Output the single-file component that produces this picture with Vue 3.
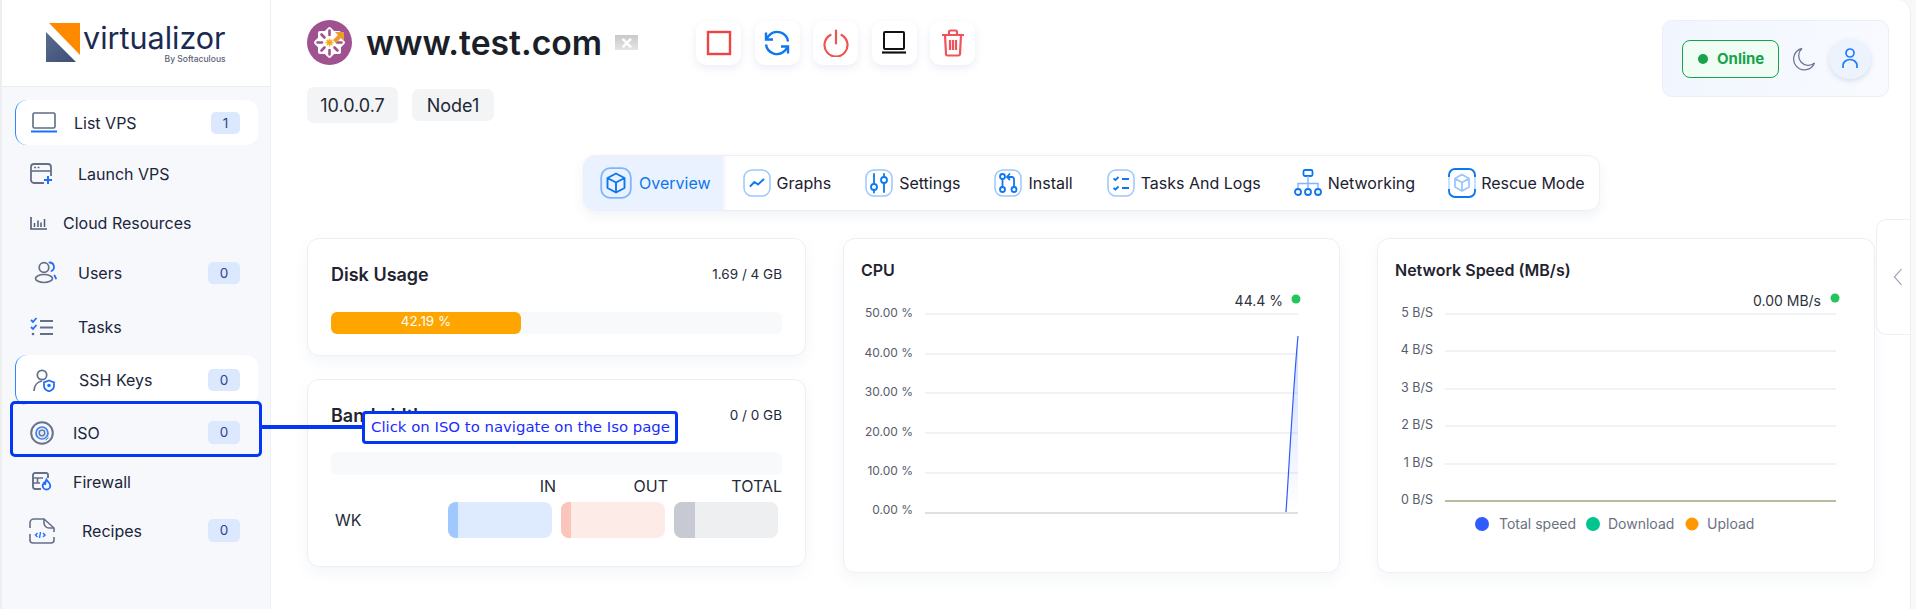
<script setup>
const cpuTicks = [
  { y: 315, ty: 317.5, label: '50.00 %' },
  { y: 355, ty: 357.5, label: '40.00 %' },
  { y: 394, ty: 396.5, label: '30.00 %' },
  { y: 434, ty: 436.5, label: '20.00 %' },
  { y: 474, ty: 476, label: '10.00 %' },
  { y: 514, ty: 515, label: '0.00 %' }
]
const netTicks = [
  { y: 315, ty: 318, label: '5 B/S' },
  { y: 352, ty: 355, label: '4 B/S' },
  { y: 390, ty: 393, label: '3 B/S' },
  { y: 427, ty: 430, label: '2 B/S' },
  { y: 465, ty: 468, label: '1 B/S' },
  { y: 502, ty: 505, label: '0 B/S' }
]
</script>

<template>
  <div class="page">
    <aside class="sidebar">
      <div class="brand">
        <svg class="brand-mark" width="36" height="42" viewBox="0 0 36 42">
          <defs>
            <linearGradient id="navy" x1="0" y1="0" x2="1" y2="1">
              <stop offset="0" stop-color="#5a6d8e" />
              <stop offset="1" stop-color="#3c4d74" />
            </linearGradient>
          </defs>
          <polygon points="3,0 34,0 34,32" fill="#ff8a00" />
          <polygon points="0,9 0,39 30,39" fill="url(#navy)" />
        </svg>
        <div class="brand-text">
          <div class="brand-name">virtualizor</div>
          <div class="brand-by">By Softaculous</div>
        </div>
      </div>

      <nav class="nav">
        <a class="item card-item first">
          <svg class="ic ic-list" width="28" height="22" viewBox="0 0 28 22">
            <rect x="3" y="1" width="22" height="15" rx="1.5" fill="none" stroke="#5f6b85" stroke-width="1.6" />
            <path d="M1 19.5h26" stroke="#1f6fff" stroke-width="2" />
          </svg>
          <span>List VPS</span>
          <b class="badge narrow">1</b>
        </a>
        <a class="item launch">
          <svg class="ic" width="24" height="22" viewBox="0 0 24 22">
            <path d="M14 20H4a3 3 0 0 1-3-3V4a3 3 0 0 1 3-3h14a3 3 0 0 1 3 3v9" fill="none" stroke="#656f87" stroke-width="1.8" />
            <path d="M1 8h20" stroke="#656f87" stroke-width="1.6" />
            <path d="M4 4.500h2M7.500 4.500h2" stroke="#656f87" stroke-width="1.4" />
            <path d="M18 13v8M14 17h8" stroke="#1f6fff" stroke-width="2" />
          </svg>
          <span>Launch VPS</span>
        </a>
        <a class="item cloud">
          <svg class="ic" width="18" height="14" viewBox="0 0 18 14">
            <path d="M1 1v12h16" fill="none" stroke="#4f5a73" stroke-width="1.6" />
            <path d="M4.500 11V7M8 11V4.500M11 11V6.500M14.500 11V3" stroke="#4f5a73" stroke-width="1.5" />
          </svg>
          <span>Cloud Resources</span>
        </a>
        <a class="item users">
          <svg class="ic" width="24" height="23" viewBox="0 0 24 23">
            <circle cx="10" cy="6.500" r="4.800" fill="none" stroke="#656f87" stroke-width="1.7" />
            <ellipse cx="10" cy="17.500" rx="8.500" ry="4" fill="none" stroke="#656f87" stroke-width="1.7" />
            <path d="M15.500 1.500a4.500 4.500 0 0 1 2 8.500M20.500 14.500l1.500 3" fill="none" stroke="#1f6fff" stroke-width="1.8" stroke-linecap="round" />
          </svg>
          <span>Users</span>
          <b class="badge">0</b>
        </a>
        <a class="item tasks">
          <svg class="ic" width="24" height="20" viewBox="0 0 24 20">
            <path d="M1 3l2 2 3.500-4M1 10l2 2 3.500-4" fill="none" stroke="#1f6fff" stroke-width="1.8" />
            <circle cx="3" cy="17" r="1.300" fill="#5f6b85" />
            <path d="M10 4h13M10 10.500h13M10 17h13" stroke="#656f87" stroke-width="1.8" />
          </svg>
          <span>Tasks</span>
        </a>
        <a class="item card-item ssh">
          <svg class="ic" width="22" height="23" viewBox="0 0 22 23">
            <circle cx="9" cy="6" r="4.700" fill="none" stroke="#656f87" stroke-width="1.700" />
            <path d="M1 22c0-5 3-9 8-10" fill="none" stroke="#656f87" stroke-width="1.700" />
            <path d="M16 11.500l5 1.800v3.700c0 2.600-2.400 4.400-5 5.400-2.600-1-5-2.800-5-5.400v-3.700z" fill="none" stroke="#1f6fff" stroke-width="1.800" />
            <circle cx="16" cy="16.500" r="1.800" fill="#1f6fff" />
          </svg>
          <span>SSH Keys</span>
          <b class="badge">0</b>
        </a>
        <a class="item iso">
          <svg class="ic" width="24" height="24" viewBox="0 0 24 24">
            <circle cx="12" cy="12" r="10.800" fill="none" stroke="#6b7388" stroke-width="2" />
            <circle cx="12" cy="12" r="6" fill="#dbe8fd" stroke="#3b82f6" stroke-width="1.700" />
            <circle cx="12" cy="12" r="2.800" fill="none" stroke="#6b7388" stroke-width="1.300" />
            <path d="M18.500 16.500a8 8 0 0 1-3 2.500" fill="none" stroke="#6b7388" stroke-width="1" />
          </svg>
          <span>ISO</span>
          <b class="badge tall">0</b>
        </a>
        <a class="item firewall">
          <svg class="ic" width="20" height="19" viewBox="0 0 20 19">
            <path d="M9 17H3a2 2 0 0 1-2-2V3a2 2 0 0 1 2-2h11a2 2 0 0 1 2 2v3" fill="none" stroke="#656f87" stroke-width="1.900" />
            <path d="M1 6h10M1 11h7M5.500 6v5" stroke="#656f87" stroke-width="1.700" />
            <path d="M14.500 7.500c.8 2 3.800 3.200 3.800 6.200a3.800 3.800 0 0 1-7.600 0c0-1.200.6-2 1.300-2.800.3.800.8 1.100 1.200 1.100.2-1.500.3-3 1.300-4.500z" fill="none" stroke="#1f6fff" stroke-width="1.900" />
          </svg>
          <span>Firewall</span>
        </a>
        <a class="item recipes">
          <svg class="ic" width="26" height="26" viewBox="0 0 26 26">
            <path d="M1 10V5a4 4 0 0 1 4-4h10l10 9v4M25 19v3a3 3 0 0 1-3 3H4a3 3 0 0 1-3-3v-6" fill="none" stroke="#656f87" stroke-width="1.600" />
            <path d="M15 1v4a5 5 0 0 0 5 5h5" fill="none" stroke="#656f87" stroke-width="1.600" />
            <path d="M8.500 15l-2 2 2 2M11.500 14l-1 6M14 15l2 2-2 2" fill="none" stroke="#1f6fff" stroke-width="1.400" />
          </svg>
          <span>Recipes</span>
          <b class="badge tall">0</b>
        </a>
      </nav>
    </aside>

    <main class="main">
      <header class="header">
        <div class="identity">
          <div class="title-row">
            <svg class="site-logo" width="45" height="45" viewBox="0 0 45 45">
              <circle cx="22.500" cy="22.500" r="22.500" fill="#a0518f" />
              <rect x="11" y="11" width="23" height="23" rx="2" fill="#fff" />
              <rect x="11" y="11" width="23" height="23" rx="2" fill="#fff" transform="rotate(45 22.500 22.500)" />
              <g stroke="#a0518f" stroke-width="2.600" stroke-linecap="round">
                <path d="M22.500 10.500v4.500M22.500 30v4.500M10.500 22.500h4.500M30 22.500h4.500M14.500 14.500l3 3M27.500 27.500l3 3M14.500 30.500l3-3" />
              </g>
              <g stroke="#f5b21a" stroke-width="1.300">
                <path d="M22.500 18.500v8M18.500 22.500h8M19.700 19.700l5.600 5.600M19.700 25.300l5.600-5.600" />
              </g>
              <circle cx="22.500" cy="22.500" r="2.200" fill="#f5a81a" />
              <polygon points="28,12 37,12 37,21 34,18 29,23 26,20 31,15" fill="#ee9b2e" />
            </svg>
            <h1>www.test.com</h1>
            <span class="flag">×</span>
          </div>
          <div class="chips">
            <span class="chip ip">10.0.0.7</span>
            <span class="chip node">Node1</span>
          </div>
        </div>

        <div class="actions">
          <button class="act">
            <svg width="26" height="26" viewBox="0 0 26 26"><rect x="2" y="2" width="22" height="22" fill="none" stroke="#ef4444" stroke-width="2.400" /></svg>
          </button>
          <button class="act">
            <svg width="26" height="26" viewBox="0 0 26 26" fill="none" stroke="#0d77f0" stroke-width="2.400">
              <path d="M24 11.500A11 11 0 0 0 5 5.500L2.500 8.500" />
              <path d="M2 14.500A11 11 0 0 0 21 20.500l2.500-3" />
              <path d="M2 2.500v7h7M24 23.500v-7h-7" />
            </svg>
          </button>
          <button class="act">
            <svg width="26" height="28" viewBox="0 0 26 28" fill="none" stroke="#ef5350" stroke-width="2.200" stroke-linecap="round">
              <path d="M13 1.500v13" />
              <path d="M7.500 6a11.500 11.500 0 1 0 11 0" />
            </svg>
          </button>
          <button class="act">
            <svg width="26" height="26" viewBox="0 0 26 26" fill="none" stroke="#111" stroke-width="2">
              <rect x="3" y="2" width="20" height="17" rx="1" />
              <path d="M1 22.500h24" stroke-width="2.200" />
            </svg>
          </button>
          <button class="act">
            <svg width="24" height="28" viewBox="0 0 24 28" fill="none" stroke="#f0545a" stroke-width="2.200">
              <path d="M1 6h22M8 6V3a1.500 1.500 0 0 1 1.500-1.500h5A1.500 1.500 0 0 1 16 3v3" />
              <path d="M4 6l1 19a1.500 1.500 0 0 0 1.500 1.500h11A1.500 1.500 0 0 0 19 25l1-19" />
              <path d="M9 11v10M12 11v10M15 11v10" />
            </svg>
          </button>
        </div>

        <div class="status">
          <span class="online"><i class="dot"></i>Online</span>
          <svg class="moon" width="24" height="24" viewBox="0 0 24 24">
            <path d="M10 1.500A10.800 10.800 0 1 0 22.500 16 9.500 9.500 0 0 1 10 1.500z" fill="none" stroke="#6e7690" stroke-width="1.300" />
          </svg>
          <span class="avatar">
            <svg width="16" height="21" viewBox="0 0 16 21" fill="none" stroke="#1f7bff" stroke-width="1.700">
              <circle cx="8" cy="5" r="4" />
              <path d="M1 20v-2.500a7 6 0 0 1 14 0V20" />
            </svg>
          </span>
        </div>
      </header>

      <div class="tabs">
        <a class="tab active">
          <svg class="tab-ic" width="32" height="32" viewBox="0 0 32 32" fill="none">
            <rect x="1.200" y="1.200" width="29.600" height="29.600" rx="9" stroke="#7db5ff" stroke-width="1.800" />
            <path d="M16 6.500l8.500 4.500v10L16 25.500 7.500 21V11zM7.500 11l8.500 4.500 8.500-4.500M16 15.500v10" stroke="#0d77f0" stroke-width="1.900" stroke-linejoin="round" />
          </svg>
          <span>Overview</span>
        </a>
        <a class="tab">
          <svg class="tab-ic" width="28" height="28" viewBox="0 0 28 28" fill="none">
            <rect x="1" y="1" width="26" height="26" rx="8" stroke="#9ac7ff" stroke-width="1.500" />
            <path d="M7.500 17l4-4 3.500 2.500 5.500-5" stroke="#0d77f0" stroke-width="1.900" stroke-linecap="round" stroke-linejoin="round" />
          </svg>
          <span>Graphs</span>
        </a>
        <a class="tab">
          <svg class="tab-ic" width="28" height="28" viewBox="0 0 28 28" fill="none">
            <rect x="1" y="1" width="26" height="26" rx="8" stroke="#9ac7ff" stroke-width="1.500" />
            <path d="M9 5v9M9 22v1.500M19 5v2M19 15v8" stroke="#0d77f0" stroke-width="1.800" stroke-linecap="round" />
            <circle cx="9" cy="18" r="3" stroke="#0d77f0" stroke-width="1.800" />
            <circle cx="19" cy="11" r="3" stroke="#0d77f0" stroke-width="1.800" />
          </svg>
          <span>Settings</span>
        </a>
        <a class="tab">
          <svg class="tab-ic" width="28" height="28" viewBox="0 0 28 28" fill="none">
            <rect x="1" y="1" width="26" height="26" rx="8" stroke="#9ac7ff" stroke-width="1.500" />
            <circle cx="8.500" cy="7.500" r="2.500" stroke="#0d77f0" stroke-width="1.800" />
            <circle cx="8.500" cy="20.500" r="2.500" stroke="#0d77f0" stroke-width="1.800" />
            <circle cx="20" cy="20.500" r="2.500" stroke="#0d77f0" stroke-width="1.800" />
            <path d="M8.500 10v8M20 18v-8a2 2 0 0 0-2-2h-4M16 4.500L13 8l3 3" stroke="#0d77f0" stroke-width="1.800" />
          </svg>
          <span>Install</span>
        </a>
        <a class="tab">
          <svg class="tab-ic" width="28" height="28" viewBox="0 0 28 28" fill="none">
            <rect x="1" y="1" width="26" height="26" rx="8" stroke="#9ac7ff" stroke-width="1.500" />
            <path d="M6.500 9.500l2 1.500 3-3M6.500 19l2 1.500 3-3" stroke="#0d77f0" stroke-width="1.800" />
            <path d="M15 10h7M15 19h7" stroke="#0d77f0" stroke-width="1.900" />
          </svg>
          <span>Tasks And Logs</span>
        </a>
        <a class="tab net">
          <svg class="tab-ic" width="28" height="28" viewBox="0 0 28 28" fill="none">
            <rect x="9.500" y="1" width="9" height="6" rx="1.500" stroke="#0d77f0" stroke-width="1.800" />
            <path d="M14 7v13M4 19v-4.500h20V19" stroke="#7db5ff" stroke-width="1.400" />
            <circle cx="4" cy="23" r="3" stroke="#0d77f0" stroke-width="1.800" />
            <circle cx="14" cy="23" r="3" stroke="#0d77f0" stroke-width="1.800" />
            <circle cx="24" cy="23" r="3" stroke="#0d77f0" stroke-width="1.800" />
          </svg>
          <span>Networking</span>
        </a>
        <a class="tab rescue">
          <svg class="tab-ic" width="28" height="30" viewBox="0 0 28 30" fill="none">
            <path d="M1 9V7a6 6 0 0 1 6-6h14a6 6 0 0 1 6 6v2M27 21v2a6 6 0 0 1-6 6H7a6 6 0 0 1-6-6v-2" stroke="#0d77f0" stroke-width="1.900" />
            <path d="M1 9v12M27 9v12" stroke="#b5d6ff" stroke-width="1.500" />
            <path d="M14 6.500l7 4v8.500l-7 4-7-4v-8.500zM7 10.500l7 4 7-4M14 14.500v8.500" stroke="#9ac7ff" stroke-width="1.800" stroke-linejoin="round" />
          </svg>
          <span>Rescue Mode</span>
        </a>
      </div>

      <section class="cards">
        <div class="col">
          <div class="card disk">
            <div class="card-head">
              <h2>Disk Usage</h2>
              <span class="amount">1.69 / 4 GB</span>
            </div>
            <div class="track"><div class="fill">42.19 %</div></div>
          </div>
          <div class="card band">
            <div class="card-head">
              <h2>Bandwidth</h2>
              <span class="amount">0 / 0 GB</span>
            </div>
            <div class="track band-track"></div>
            <div class="band-head">
              <span>IN</span>
              <span>OUT</span>
              <span>TOTAL</span>
            </div>
            <div class="band-row">
              <span class="wk">WK</span>
              <div class="meter blue"><i></i></div>
              <div class="meter red"><i></i></div>
              <div class="meter gray"><i></i></div>
            </div>
          </div>
        </div>

        <div class="card chart-card">
          <h3>CPU</h3>
          <svg class="chart" width="495" height="280" viewBox="844 285 495 280">
            <defs>
              <linearGradient id="cpuFill" x1="0" y1="0" x2="0" y2="1">
                <stop offset="0" stop-color="#2f5bff" stop-opacity="0.22" />
                <stop offset="1" stop-color="#2f5bff" stop-opacity="0" />
              </linearGradient>
            </defs>
            <text class="value" x="1283" y="307" text-anchor="end">44.4 %</text>
            <circle cx="1296" cy="300" r="4.500" fill="#22c55e" />
            <template v-for="(t, i) in cpuTicks" :key="t.label">
              <line x1="925" x2="1298" :y1="t.y" :y2="t.y" :stroke="i === 5 ? '#e0e0e2' : '#eceef2'" :stroke-width="i === 5 ? 2 : 1.400" />
              <text class="tick cpu-tick" x="913" :y="t.ty" text-anchor="end">{{ t.label }}</text>
            </template>
            <path d="M1286 513C1289 470 1293 390 1298 337V513z" fill="url(#cpuFill)" />
            <path d="M1286 513C1289 470 1293 390 1298 337" fill="none" stroke="#2f5bff" stroke-width="1.200" />
          </svg>
        </div>

        <div class="card chart-card">
          <h3>Network Speed (MB/s)</h3>
          <svg class="chart" width="496" height="280" viewBox="1378 285 496 280">
            <text class="value" x="1821" y="307" text-anchor="end">0.00 MB/s</text>
            <circle cx="1835" cy="299" r="4.500" fill="#22c55e" />
            <template v-for="(t, i) in netTicks" :key="t.label">
              <line x1="1445" x2="1836" :y1="t.y" :y2="t.y" :stroke="i === 5 ? '#b9bc9f' : '#eceef2'" :stroke-width="i === 5 ? 2 : 1.400" />
              <text class="tick" x="1433" :y="t.ty" text-anchor="end">{{ t.label }}</text>
            </template>
            <circle cx="1482" cy="525" r="7" fill="#2f5bff" />
            <text class="legend" x="1499" y="530">Total speed</text>
            <circle cx="1593" cy="525" r="7" fill="#00c58e" />
            <text class="legend" x="1608" y="530">Download</text>
            <circle cx="1692" cy="525" r="6.500" fill="#ff9800" />
            <text class="legend" x="1707" y="530">Upload</text>
          </svg>
        </div>
      </section>

      <div class="side-tab">
        <svg width="10" height="18" viewBox="0 0 10 18"><path d="M8.500 1L1.500 9l7 8" fill="none" stroke="#8e97b3" stroke-width="1.100" /></svg>
      </div>
    </main>

    <div class="anno-box"></div>
    <div class="anno-line"></div>
    <div class="anno-tip">Click on ISO to navigate on the Iso page</div>
  </div>
</template>

<style>
html, body { margin: 0; background: #fff; overflow: hidden; }
</style>

<style scoped>
.page {
  position: relative;
  display: flex;
  width: 1916px;
  height: 609px;
  overflow: hidden;
  background: #f8f8f8;
  font-family: Inter, "Noto Sans", sans-serif;
  color: #1f2430;
}
.sidebar {
  box-sizing: border-box;
  width: 271px;
  flex: none;
  background: #f6f8fc;
  border-left: 2px solid #eeeeee;
  border-right: 1px solid #eef0f4;
}
.brand {
  box-sizing: border-box;
  position: relative;
  height: 87px;
  padding: 23px 0 0 44px;
  display: flex;
  background: #fff;
  border-bottom: 1px solid #e9ecf1;
}
.brand-mark { flex: none; }
.brand-text { margin-left: 1px; }
.brand-name {
  font-size: 30.500px;
  line-height: 30px;
  color: #1b2a52;
}
.brand-by {
  font-size: 8.500px;
  line-height: 12px;
  margin-top: 0;
  font-weight: 500;
  color: #5b6478;
  text-align: right;
}
.nav {
  display: flex;
  flex-direction: column;
  padding: 13px 0 0 13px;
}
.item {
  box-sizing: border-box;
  display: flex;
  align-items: center;
  width: 243px;
  height: 45px;
  margin-top: 5px;
  font-size: 16px;
  font-weight: 400;
  color: #20263a;
  border-radius: 12px;
}
.ic { flex: none; }
.first { margin-top: 0; padding-left: 14px; }
.first span { margin-left: 16px; }
.card-item {
  background: #fff;
  border-left: 1.500px solid #2f86ff;
}
.launch { margin-top: 6px; padding-left: 15px; }
.launch span { margin-left: 24px; }
.cloud { margin-top: 4px; padding-left: 15px; }
.cloud span { margin-left: 15px; }
.users { padding-left: 19px; }
.users span { margin-left: 20px; }
.tasks { margin-top: 9px; padding-left: 15px; }
.tasks span { margin-left: 24px; }
.ssh { margin-top: 6px; height: 50px; padding-left: 17px; }
.ssh span { margin-left: 24px; }
.iso { margin-top: 5px; padding-left: 15px; }
.iso span { margin-left: 19px; }
.firewall { margin-top: 4px; padding-left: 17px; }
.firewall span { margin-left: 21px; }
.recipes { margin-top: 4px; padding-left: 14px; }
.recipes span { margin-left: 27px; }
.badge {
  margin-left: auto;
  margin-right: 18px;
  width: 32px;
  height: 22px;
  line-height: 22px;
  text-align: center;
  border-radius: 5px;
  background: #dbe8fd;
  color: #30448f;
  font-size: 13.500px;
  font-weight: 400;
}
.badge.narrow { width: 29px; }
.badge.tall { height: 23px; line-height: 23px; }

.main {
  box-sizing: border-box;
  position: relative;
  flex: 1;
  margin-right: 5px;
  background: #fff;
  border-right: 1px solid #efefef;
  border-top-right-radius: 14px;
}
.header {
  box-sizing: border-box;
  display: flex;
  height: 155px;
  padding: 20px 21px 0 36px;
}
.identity { width: 389px; flex: none; }
.title-row { display: flex; align-items: center; height: 45px; }
h1 {
  margin: 0 0 0 14px;
  font-size: 33.700px;
  line-height: 45px;
  font-weight: 600;
  color: #1b1f29;
}
.flag {
  width: 23px;
  height: 15px;
  margin: 0 0 0 13px;
  background: linear-gradient(#c9c9c9, #e4e4e4);
  color: #fff;
  font-size: 20px;
  font-weight: 600;
  line-height: 15px;
  text-align: center;
}
.chips { display: flex; align-items: center; gap: 14px; margin-top: 22px; }
.chip {
  display: flex;
  align-items: center;
  justify-content: center;
  background: #f3f4f6;
  border-radius: 7px;
  font-size: 18px;
  color: #222834;
}
.ip { width: 91px; height: 36px; }
.node { width: 82px; height: 32px; }
.actions { display: flex; gap: 13.500px; height: 45px; margin-top: 1px; }
.act {
  width: 45px;
  height: 44px;
  display: flex;
  align-items: center;
  justify-content: center;
  padding: 0;
  border: 0;
  border-radius: 10px;
  background: #fff;
  box-shadow: 0 3px 8px rgba(90, 110, 170, 0.12);
}
.status {
  box-sizing: border-box;
  display: flex;
  align-items: center;
  width: 227px;
  height: 77px;
  margin-left: auto;
  padding-left: 19px;
  background: linear-gradient(100deg, #f1f6fe, #f8faff);
  border: 1px solid #e9eff8;
  border-radius: 10px;
}
.online {
  box-sizing: border-box;
  display: flex;
  align-items: center;
  width: 97px;
  height: 38px;
  padding-left: 15px;
  background: #effdf4;
  border: 1px solid #16a34a;
  border-radius: 8px;
  color: #16a34a;
  font-size: 15px;
  font-weight: 700;
}
.dot {
  width: 10px;
  height: 10px;
  margin-right: 9px;
  border-radius: 50%;
  background: #16a34a;
}
.moon { margin-left: 13px; }
.avatar {
  display: flex;
  align-items: center;
  justify-content: center;
  width: 42px;
  height: 40px;
  margin-left: 13px;
  border-radius: 50%;
  background: #edf3fd;
  box-shadow: 0 2px 5px rgba(80, 100, 150, 0.18);
}

.tabs {
  box-sizing: border-box;
  display: flex;
  width: 1017px;
  height: 56px;
  margin-left: 312px;
  background: #fff;
  border: 1px solid #edeff4;
  border-radius: 12px;
  box-shadow: 0 5px 12px rgba(120, 135, 175, 0.1);
  overflow: hidden;
}
.tab {
  display: flex;
  flex: none;
  align-items: center;
  gap: 6px;
  padding: 0 17px;
  font-size: 16px;
  font-weight: 400;
  white-space: nowrap;
  color: #1c2130;
}
.tab-ic { flex: none; }
.active {
  background: #e9f2fe;
  color: #0d77f0;
  gap: 7px;
  padding: 0 12px 0 16px;
  box-shadow: 2px 0 3px rgba(120, 135, 175, 0.1);
}
.active + .tab { padding-left: 20px; }
.net { padding-left: 16px; }
.rescue { padding-left: 16px; gap: 5px; }

.cards {
  display: flex;
  align-items: flex-start;
  gap: 37px;
  margin: 27px 0 0 36px;
}
.col { display: flex; flex-direction: column; gap: 23px; width: 499px; flex: none; }
.card {
  box-sizing: border-box;
  background: #fff;
  border: 1px solid #edeff4;
  border-radius: 12px;
  box-shadow: 0 6px 14px rgba(120, 135, 175, 0.08);
}
.disk { height: 118px; padding: 23px 23px 0; }
.band { height: 188px; padding: 23px 23px 0; }
.card-head { display: flex; justify-content: space-between; align-items: center; height: 24px; }
h2 { margin: 0; font-size: 18px; font-weight: 600; color: #1f2430; }
h3 { margin: 0; padding: 19px 0 0 17px; font-size: 16px; line-height: 24px; font-weight: 600; color: #1f2430; }
.amount { font-size: 13.500px; color: #23283a; }
.track {
  height: 22px;
  margin-top: 26px;
  background: #f8f9fb;
  border-radius: 6px;
}
.fill {
  width: 190px;
  height: 22px;
  line-height: 19px;
  text-align: center;
  background: #ffa500;
  border-radius: 6px;
  color: #fff;
  font-size: 13.500px;
}
.band-track { height: 23px; margin-top: 25px; }
.band-head {
  display: grid;
  grid-template-columns: 225px 112px 1fr;
  height: 22px;
  text-align: right;
  font-size: 16px;
  line-height: 22px;
  color: #262b38;
}
.band-row { display: flex; align-items: center; margin-top: 5px; }
.wk { flex: none; width: 117px; padding-left: 4px; box-sizing: border-box; font-size: 16px; color: #262b38; }
.meter { flex: none; width: 104px; height: 36px; margin-right: 9px; border-radius: 8px; overflow: hidden; }
.meter i { display: block; height: 100%; }
.blue { background: #deebfe; }
.blue i { width: 10px; background: #9fc9fe; }
.red { background: #fdebe8; }
.red i { width: 10px; background: #fac5bb; }
.gray { background: #eeeff1; }
.gray i { width: 21px; background: #c7cad2; }

.chart-card { flex: none; width: 497px; height: 335px; }
.chart-card:last-child { width: 498px; }
.chart { display: block; margin-top: 2px; }
.tick { font-size: 12.500px; fill: #565c6b; font-family: Inter, sans-serif; }
.cpu-tick { font-size: 12px; }
.value { font-size: 14px; fill: #2d3340; font-family: Inter, sans-serif; }
.legend { font-size: 14px; fill: #6b7280; font-family: Inter, sans-serif; }

.side-tab {
  box-sizing: border-box;
  position: absolute;
  top: 219px;
  right: 0;
  width: 34px;
  height: 116px;
  display: flex;
  align-items: center;
  padding-left: 16px;
  background: #fff;
  border: 1px solid #edeff4;
  border-right: 0;
  border-radius: 10px 0 0 10px;
}

.anno-box {
  box-sizing: border-box;
  position: absolute;
  left: 10px;
  top: 401px;
  width: 252px;
  height: 56px;
  border: 3px solid #0336f5;
  border-radius: 5px;
}
.anno-line {
  position: absolute;
  left: 262px;
  top: 425px;
  width: 101px;
  height: 4px;
  background: #0336f5;
}
.anno-tip {
  box-sizing: border-box;
  position: absolute;
  left: 362px;
  top: 411px;
  width: 316px;
  height: 33px;
  line-height: 27px;
  padding-left: 6px;
  white-space: nowrap;
  background: #fff;
  border: 3px solid #0336f5;
  border-radius: 4px;
  color: #1a2dff;
  font-family: "DejaVu Sans", Verdana, sans-serif;
  font-size: 14.900px;
}
</style>
